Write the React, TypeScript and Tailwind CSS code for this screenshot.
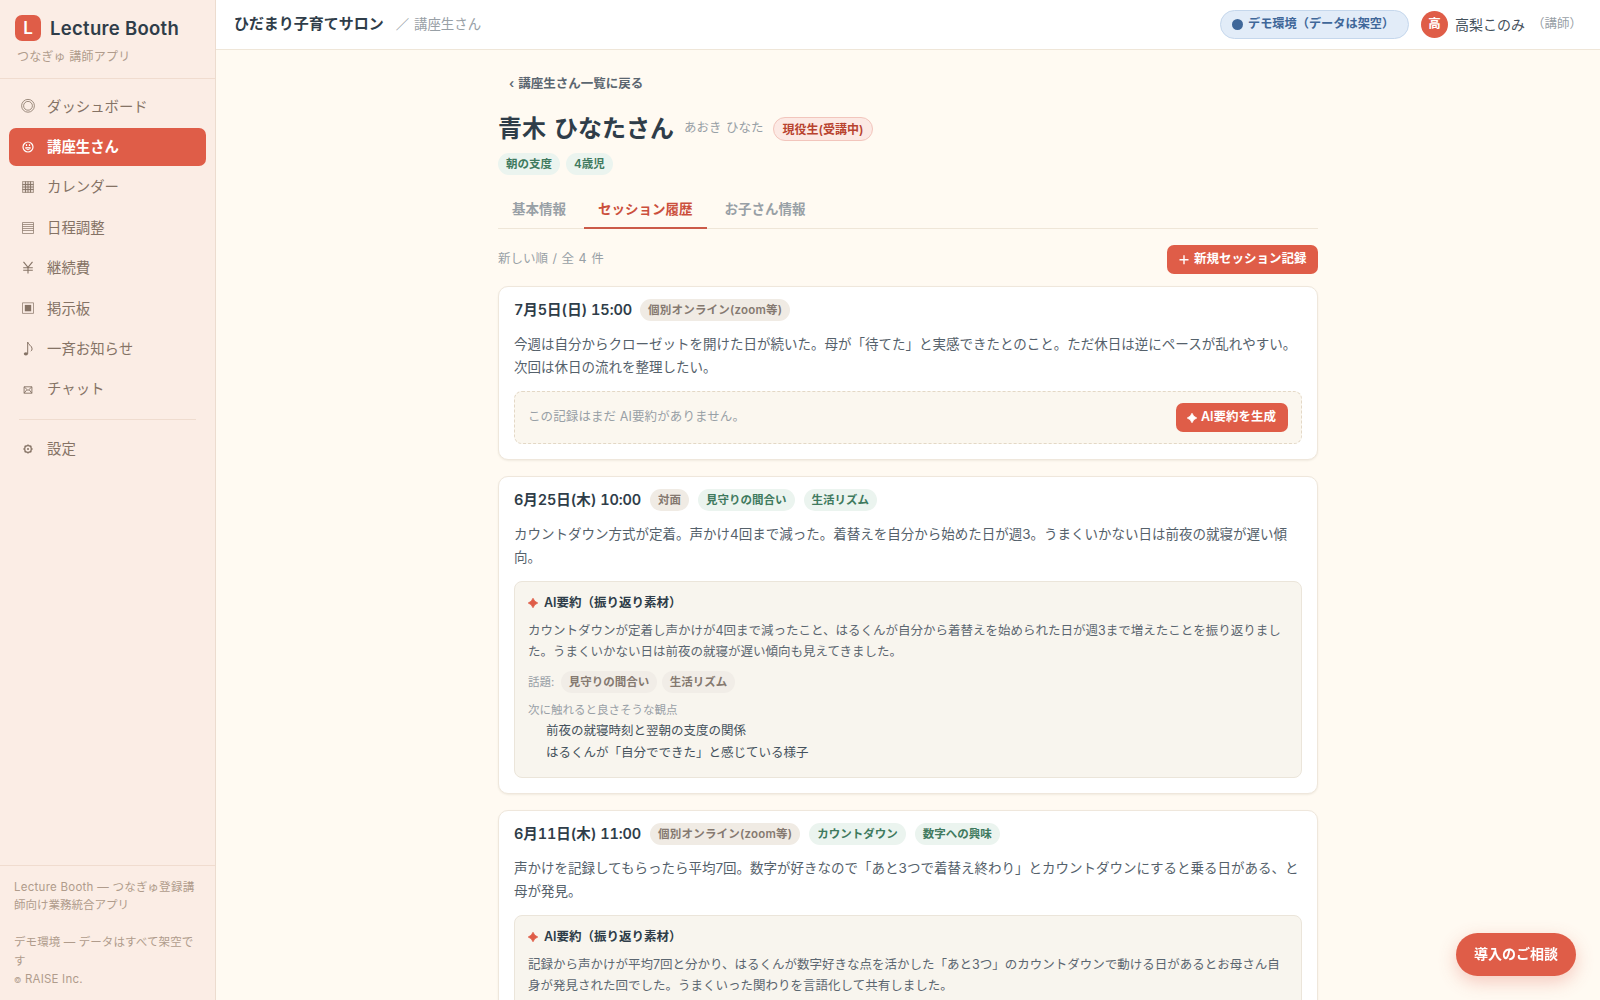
import * as React from 'react'
import clsx from 'clsx'

type IconName = 'dashboard' | 'students' | 'calendar' | 'schedule' | 'fee' | 'board' | 'notice' | 'chat' | 'settings'

interface NavItem {
  icon: IconName
  label: string
}

interface Summary {
  lines: string[]
  topics: string[]
  viewpoints: string[]
}

interface Session {
  id: number
  date: string
  dateClass: string
  method: string
  tags: string[]
  note: string[]
  summary?: Summary
}

const NAV: NavItem[] = [
  { icon: 'dashboard', label: 'ダッシュボード' },
  { icon: 'students', label: '講座生さん' },
  { icon: 'calendar', label: 'カレンダー' },
  { icon: 'schedule', label: '日程調整' },
  { icon: 'fee', label: '継続費' },
  { icon: 'board', label: '掲示板' },
  { icon: 'notice', label: '一斉お知らせ' },
  { icon: 'chat', label: 'チャット' },
]

const TABS = ['基本情報', 'セッション履歴', 'お子さん情報']

const SESSIONS: Session[] = [
  {
    id: 4,
    date: '7月5日(日) 15:00',
    dateClass: 'w-[117px] tracking-[-0.06px]',
    method: '個別オンライン(zoom等)',
    tags: [],
    note: [
      '今週は自分からクローゼットを開けた日が続いた。母が「待てた」と実感できたとのこと。ただ休日は逆にペースが乱れやすい。',
      '次回は休日の流れを整理したい。',
    ],
  },
  {
    id: 3,
    date: '6月25日(木) 10:00',
    dateClass: 'w-[127px] tracking-[-0.08px]',
    method: '対面',
    tags: ['見守りの間合い', '生活リズム'],
    note: [
      'カウントダウン方式が定着。声かけ4回まで減った。着替えを自分から始めた日が週3。うまくいかない日は前夜の就寝が遅い傾',
      '向。',
    ],
    summary: {
      lines: [
        'カウントダウンが定着し声かけが4回まで減ったこと、はるくんが自分から着替えを始められた日が週3まで増えたことを振り返りまし',
        'た。うまくいかない日は前夜の就寝が遅い傾向も見えてきました。',
      ],
      topics: ['見守りの間合い', '生活リズム'],
      viewpoints: ['前夜の就寝時刻と翌朝の支度の関係', 'はるくんが「自分でできた」と感じている様子'],
    },
  },
  {
    id: 2,
    date: '6月11日(木) 11:00',
    dateClass: 'w-[127px] tracking-[-0.08px]',
    method: '個別オンライン(zoom等)',
    tags: ['カウントダウン', '数字への興味'],
    note: [
      '声かけを記録してもらったら平均7回。数字が好きなので「あと3つで着替え終わり」とカウントダウンにすると乗る日がある、と',
      '母が発見。',
    ],
    summary: {
      lines: [
        '記録から声かけが平均7回と分かり、はるくんが数字好きな点を活かした「あと3つ」のカウントダウンで動ける日があるとお母さん自',
        '身が発見された回でした。うまくいった関わりを言語化して共有しました。',
      ],
      topics: [],
      viewpoints: [],
    },
  },
]

function NavIcon({ name }: { name: IconName }) {
  return (
    <svg viewBox="0 0 16 16" className="size-4 shrink-0" fill="none" stroke="currentColor" strokeWidth="0.8">
      {name === 'dashboard' && (
        <>
          <circle cx="8" cy="7.8" r="6.4" strokeWidth="0.8" />
          <circle cx="8" cy="7.8" r="4.4" strokeWidth="0.8" />
        </>
      )}
      {name === 'students' && (
        <>
          <circle cx="8" cy="8" r="5" strokeWidth="1.2" />
          <path d="M5.6 8.6c.3 2.7 4.5 2.7 4.8 0z" fill="currentColor" fillOpacity="0.4" strokeWidth="0.9" />
          <path d="M6.5 5.3v1.6M9.5 5.3v1.6" strokeWidth="1.2" />
        </>
      )}
      {name === 'calendar' && (
        <>
          <path d="M2.5 2.5h11v11h-11z" fill="currentColor" fillOpacity="0.2" strokeWidth="0.6" />
          <path d="M5.5 2.5v11M8 2.5v11M10.5 2.5v11M2.5 5.5h11M2.5 8h11M2.5 10.5h11" strokeWidth="0.9" />
        </>
      )}
      {name === 'schedule' && (
        <>
          <path d="M2.5 2.5h11v11h-11z" strokeWidth="0.7" />
          <path d="M2.5 4.5h11M2.5 6.5h11M2.5 8.5h11M2.5 10.5h11" strokeWidth="0.7" />
        </>
      )}
      {name === 'fee' && <path d="M3.5 1.8 8 7.4l4.5-5.6M8 7.4v6.2M3.2 7.8h9.6M3.2 10.3h9.6" strokeWidth="1.1" />}
      {name === 'board' && (
        <>
          <path d="M2.5 2.8h11v10.6h-11z" strokeWidth="0.7" />
          <path d="M4.8 4.9h6.4v6.4H4.8z" fill="currentColor" stroke="none" />
        </>
      )}
      {name === 'notice' && (
        <>
          <path d="M7.7 12.8V1.1c.3 2.6 4.5 3.6 4.4 6.8 0 1-.5 1.8-1.3 2.3" strokeWidth="1" />
          <ellipse cx="5.9" cy="12.8" rx="2.1" ry="1.6" fill="currentColor" stroke="none" />
        </>
      )}
      {name === 'chat' && (
        <path d="M4.1 5.8h7.8v6.4H4.1zM4.1 5.8 8 9.5l3.9-3.7M4.1 12.2l2.7-3.4M11.9 12.2 9.2 8.8" strokeWidth="0.9" />
      )}
      {name === 'settings' && (
        <>
          <circle cx="8" cy="8" r="3.3" strokeWidth="1.3" />
          <circle cx="8" cy="8" r="1" fill="currentColor" stroke="none" />
          <path
            d="M8 3.4v1M8 11.6v1M3.4 8h1M11.6 8h1M4.7 4.7l.8.8M10.5 10.5l.8.8M11.3 4.7l-.8.8M5.5 10.5l-.8.8"
            strokeWidth="1.4"
          />
        </>
      )}
    </svg>
  )
}

function Sparkle({ className }: { className?: string }) {
  return (
    <svg viewBox="0 0 10 10" className={clsx('shrink-0', className)} fill="currentColor">
      <path d="M5 .2Q6.2 3.8 9.8 5 6.2 6.2 5 9.8 3.8 6.2.2 5 3.8 3.8 5 .2z" stroke="currentColor" strokeWidth="0.7" />
    </svg>
  )
}

function Badge({ tone, children }: { tone: 'green' | 'gray' | 'soft'; children: React.ReactNode }) {
  return (
    <span
      className={clsx(
        'flex h-[22px] items-center rounded-full pt-px text-[11.5px] font-semibold whitespace-nowrap',
        tone === 'green' && 'bg-[#ebf4ef] px-2 text-[#3f7a5e]',
        tone === 'gray' && 'bg-[#f0ebe4] px-2 text-[#857970]',
        tone === 'soft' && 'bg-[#f1ede7] px-[7.5px] text-[#857970]',
      )}
    >
      {children}
    </span>
  )
}

function NavRow({ item, active }: { item: NavItem; active?: boolean }) {
  return (
    <a
      className={clsx(
        'flex h-[38.4px] items-center gap-[11px] rounded-[7px] pl-[11px] text-[14.4px]',
        active ? 'bg-[#df5d48] font-semibold text-white' : 'text-[#857365]',
      )}
    >
      <NavIcon name={item.icon} />
      <span className="whitespace-nowrap">{item.label}</span>
    </a>
  )
}

function Sidebar() {
  return (
    <aside className="flex w-[216px] shrink-0 flex-col border-r border-[#ecdccf] bg-[#fbede5]">
      <div className="h-[79px] shrink-0 border-b border-[#f0dccf] pt-[15px] pl-[15px]">
        <div className="flex h-[26px] items-center gap-[9px]">
          <div className="flex size-[26px] items-center justify-center rounded-[7px] bg-[#df5d48] pt-px text-[17px] font-semibold text-white">
            L
          </div>
          <div className="pt-px text-[18.5px] font-semibold tracking-[0.3px] whitespace-nowrap text-[#2f3d49]">
            Lecture Booth
          </div>
        </div>
        <div className="mt-[6px] pl-0.5 text-[12px] leading-5 tracking-[0.25px] whitespace-nowrap text-[#b09c8c]">
          つなぎゅ 講師アプリ
        </div>
      </div>

      <nav className="flex flex-1 flex-col gap-0.5 px-[9px] pt-[8.3px]">
        {NAV.map((item) => (
          <NavRow key={item.icon} item={item} active={item.icon === 'students'} />
        ))}
        <div className="mx-2.5 mt-[8.4px] mb-[7.6px] h-px shrink-0 bg-[#efdccf]" />
        <NavRow item={{ icon: 'settings', label: '設定' }} />
      </nav>

      <div className="h-[135px] shrink-0 border-t border-[#f0dccf] pt-3 pl-[14px] text-[11.5px] leading-[18.4px] whitespace-nowrap text-[#b09c8c]">
        <p className="tracking-[0.26px]">Lecture Booth — つなぎゅ登録講</p>
        <p>師向け業務統合アプリ</p>
        <p className="mt-[18.4px] tracking-[0.1px]">デモ環境 — データはすべて架空で</p>
        <p>す</p>
        <p className="tracking-[0.2px]">
          <span className="text-[8px]">©</span> RAISE Inc.
        </p>
      </div>
    </aside>
  )
}

function TopBar() {
  return (
    <header className="flex h-[50px] shrink-0 items-center border-b border-[#efe6d8] bg-white pr-[18px] pb-px pl-[18px] whitespace-nowrap">
      <span className="text-[15px] font-semibold text-[#2f3d49]">ひだまり子育てサロン</span>
      <span className="ml-3 text-[13.4px] text-[#98a0a6]">
        ／<span className="ml-[5px]">講座生さん</span>
      </span>

      <div className="ml-auto flex h-[29px] w-[189px] items-center rounded-full border border-[#c5d7ec] bg-[#e2ecf8] pl-[11px] text-[12.2px] font-semibold text-[#3f6799]">
        <span className="mr-[5px] size-[11px] shrink-0 rounded-full bg-[#3f6799]" />
        デモ環境（データは架空）
      </div>
      <div className="ml-3 flex size-[27px] items-center justify-center rounded-full bg-[#df5d48] text-[12.5px] font-semibold text-white">
        高
      </div>
      <span className="ml-[7px] text-[14px] text-[#44515c]">高梨このみ</span>
      <span className="ml-[7px] text-[12.5px] text-[#98a0a6]">（講師）</span>
    </header>
  )
}

function SummaryBox({ summary }: { summary: Summary }) {
  return (
    <div className="mt-3 h-[197px] rounded-lg border border-[#ebe5da] bg-[#f8f5ee] px-[13px] pt-[10px] whitespace-nowrap">
      <div className="flex h-[22px] items-center text-[12.5px] font-semibold text-[#2f3d49]">
        <Sparkle className="mr-1.5 size-[10px] text-[#df5d48]" />
        AI要約（振り返り素材）
      </div>
      <div className="mt-[6px] text-[12.5px] leading-[21.25px] text-[#5b6670]">
        {summary.lines.map((line) => (
          <p key={line}>{line}</p>
        ))}
      </div>
      {summary.topics.length > 0 && (
        <div className="mt-[8.5px] flex items-center">
          <span className="mr-[7px] pt-px text-[11.5px] text-[#98a0a6]">話題:</span>
          <div className="flex gap-[5.5px]">
            {summary.topics.map((topic) => (
              <Badge key={topic} tone="soft">
                {topic}
              </Badge>
            ))}
          </div>
        </div>
      )}
      {summary.viewpoints.length > 0 && (
        <>
          <p className="mt-[7.5px] text-[11.5px] leading-[18px] text-[#98a0a6]">次に触れると良さそうな観点</p>
          <ul className="pt-px pl-[18px] text-[12.5px] leading-[22px] text-[#44515c]">
            {summary.viewpoints.map((viewpoint) => (
              <li key={viewpoint}>{viewpoint}</li>
            ))}
          </ul>
        </>
      )}
    </div>
  )
}

function SessionCard({ session }: { session: Session }) {
  return (
    <article className="rounded-[10px] border border-[#efe7dc] bg-white px-[15px] pt-3 pb-[15px] shadow-[0_1px_2px_rgba(80,60,30,0.08)]">
      <div className="flex h-[22px] items-center gap-[9px]">
        <span
          className={clsx('text-[14.5px] font-semibold whitespace-nowrap text-[#2f3d49] tabular-nums', session.dateClass)}
        >
          {session.date}
        </span>
        <Badge tone="gray">
          {session.method.includes('zoom') ? <span className="tracking-[0.22px]">{session.method}</span> : session.method}
        </Badge>
        {session.tags.map((tag) => (
          <Badge key={tag} tone="green">
            {tag}
          </Badge>
        ))}
      </div>

      <div className="mt-3 text-[13.5px] leading-[23px] whitespace-nowrap text-[#55616b]">
        {session.note.map((line) => (
          <p key={line}>{line}</p>
        ))}
      </div>

      {session.summary ? (
        <SummaryBox summary={session.summary} />
      ) : (
        <div className="mt-3 flex h-[53px] items-center justify-between rounded-lg border border-dashed border-[#e3d8c6] bg-[#fbf7ef] px-[13px]">
          <span className="text-[12.5px] tracking-[0.1px] text-[#98a0a6]">この記録はまだ AI要約がありません。</span>
          <button className="flex h-[29px] w-28 items-center rounded-[7px] bg-[#df5d48] pl-[11px] text-[12.5px] font-semibold whitespace-nowrap text-white">
            <Sparkle className="mr-1 size-[10px]" />
            AI要約を生成
          </button>
        </div>
      )}
    </article>
  )
}

export default function App() {
  const [tab, setTab] = React.useState('セッション履歴')

  return (
    <div className="flex h-[1000px] w-[1600px] overflow-hidden bg-[#fffaf2] font-['Inter','Noto_Sans_CJK_JP',sans-serif]">
      <Sidebar />

      <div className="flex min-w-0 flex-1 flex-col">
        <TopBar />

        <main className="mx-auto min-h-0 w-[820px] flex-1 pt-[23px]">
          <a className="flex h-[23px] items-center pl-[11px] text-[12.5px] font-semibold text-[#5b6670]">
            <span className="mr-1">‹</span>講座生さん一覧に戻る
          </a>

          <div className="mt-[14px] flex h-[38px] items-center whitespace-nowrap">
            <h1 className="w-[176px] text-[24px] font-semibold text-[#2f3d49] [word-spacing:2px]">青木 ひなたさん</h1>
            <span className="mb-0.5 ml-[10px] w-[80px] text-[12.5px] text-[#98a0a6] [word-spacing:1px]">
              あおき ひなた
            </span>
            <span className="ml-[9px] flex h-6 items-center rounded-full border border-[#f2c5bc] bg-[#fce9e4] px-[8.5px] pt-px text-[12px] font-semibold text-[#b8432f]">
              現役生(受講中)
            </span>
          </div>

          <div className="mt-[5px] flex gap-1.5">
            <Badge tone="green">朝の支度</Badge>
            <Badge tone="green">4歳児</Badge>
          </div>

          <div className="mt-[15px] flex h-[39px] gap-1 border-b border-[#efe6d8]">
            {TABS.map((name) => (
              <button
                key={name}
                onClick={() => setTab(name)}
                className={clsx(
                  '-mb-px flex h-[39px] items-center border-b-2 px-[14px] pt-[2px] text-[13.5px] font-semibold',
                  name === tab ? 'border-[#cb5a49] text-[#cb4f3c]' : 'border-transparent text-[#98a0a6]',
                )}
              >
                {name}
              </button>
            ))}
          </div>

          <div className="mt-4 mb-3 flex h-[29px] items-center justify-between">
            <span className="text-[12.5px] text-[#98a0a6] [word-spacing:1px]">新しい順 / 全 4 件</span>
            <button className="flex h-[29px] w-[151px] items-center rounded-[7px] bg-[#df5d48] pl-[11px] text-[12.5px] font-semibold whitespace-nowrap text-white">
              <svg viewBox="0 0 12 12" className="mr-1 size-3" fill="none" stroke="currentColor" strokeWidth="1.4">
                <path d="M6 1.2v9M1.5 5.7h9" />
              </svg>
              新規セッション記録
            </button>
          </div>

          <div className="flex flex-col gap-4">
            {SESSIONS.map((session) => (
              <SessionCard key={session.id} session={session} />
            ))}
          </div>
        </main>
      </div>

      <button className="fixed right-6 bottom-6 flex h-[43px] w-[120px] items-center justify-center rounded-full bg-[#df5d48] pb-0.5 text-[14px] font-semibold whitespace-nowrap text-white shadow-[0_6px_18px_rgba(223,93,72,0.3)]">
        導入のご相談
      </button>
    </div>
  )
}
